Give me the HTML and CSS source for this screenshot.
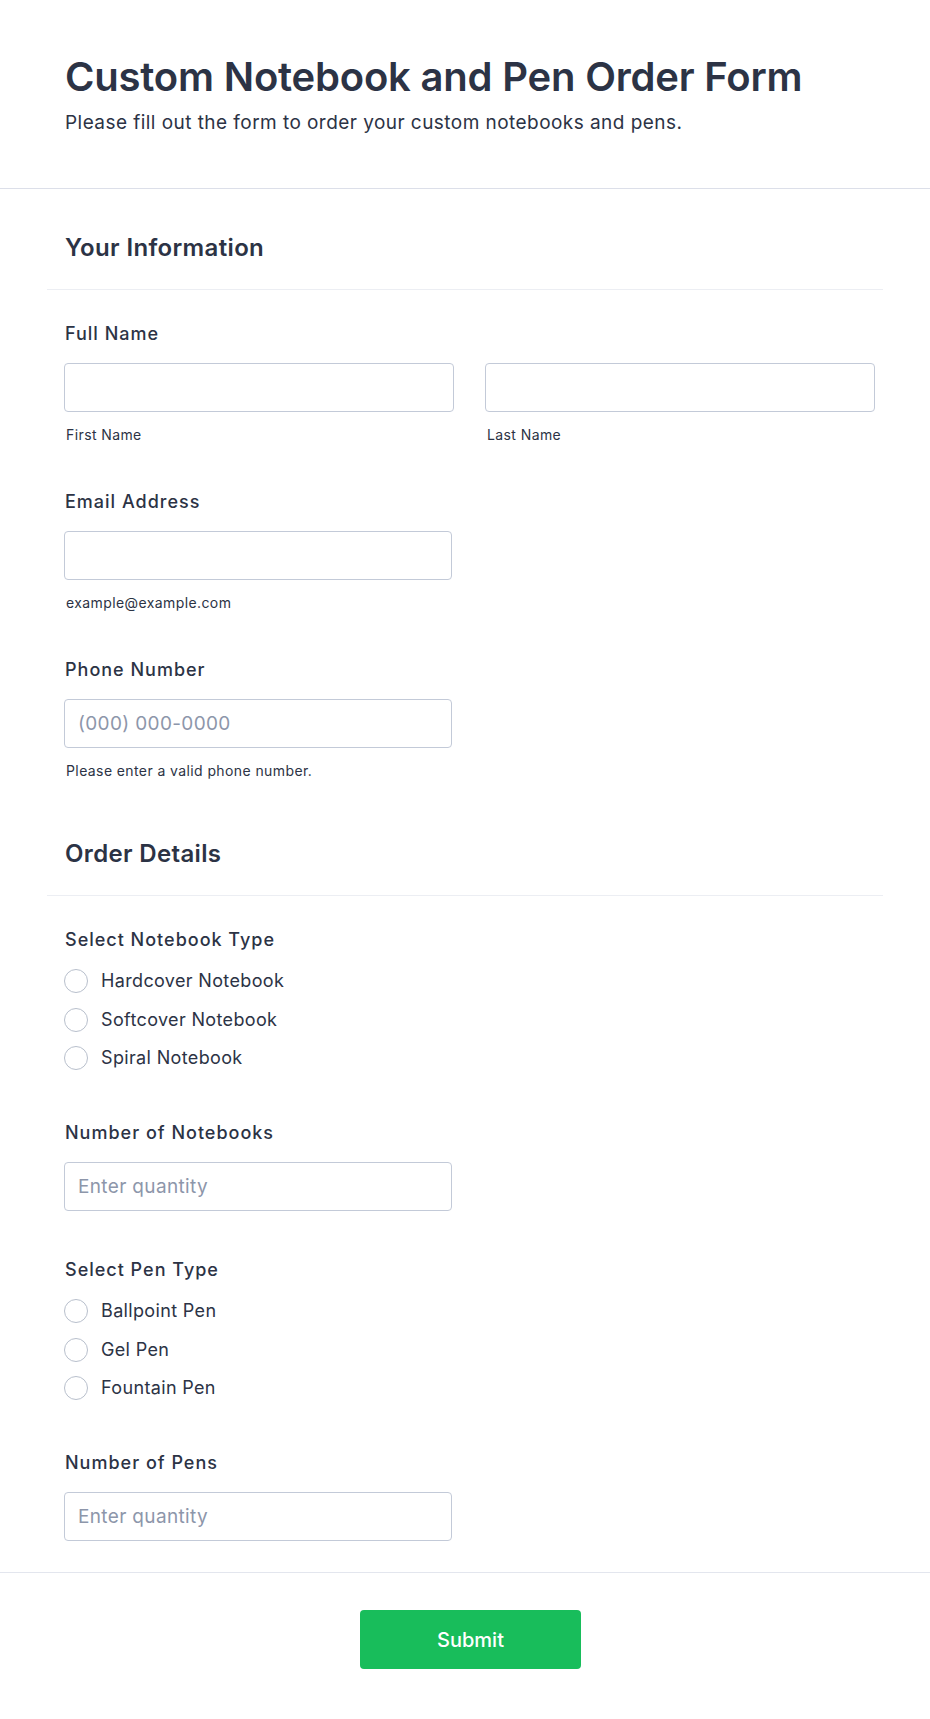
FILE: index.html
```html
<!DOCTYPE html>
<html lang="en">
<head>
<meta charset="utf-8">
<title>Custom Notebook and Pen Order Form</title>
<link rel="stylesheet" href="styles.css">
</head>
<body>
<div class="page">
  <header class="form-header">
    <h1 class="form-title">Custom Notebook and Pen Order Form</h1>
    <p class="form-subtitle">Please fill out the form to order your custom notebooks and pens.</p>
  </header>

  <section class="section">
    <div class="section-head"><h2 class="section-title">Your Information</h2></div>
    <div class="fields">
      <div class="field">
        <label class="field-label">Full Name</label>
        <div class="name-row">
          <div class="sub-col">
            <input class="text-input" type="text">
            <span class="sublabel">First Name</span>
          </div>
          <div class="sub-col">
            <input class="text-input" type="text">
            <span class="sublabel">Last Name</span>
          </div>
        </div>
      </div>
      <div class="field field-gap">
        <label class="field-label">Email Address</label>
        <input class="text-input single" type="email">
        <span class="sublabel">example@example.com</span>
      </div>
      <div class="field field-gap">
        <label class="field-label">Phone Number</label>
        <input class="text-input single" type="tel" placeholder="(000) 000-0000">
        <span class="sublabel">Please enter a valid phone number.</span>
      </div>
    </div>
  </section>

  <section class="section">
    <div class="section-head"><h2 class="section-title">Order Details</h2></div>
    <div class="fields">
      <div class="field">
        <label class="field-label">Select Notebook Type</label>
        <div class="radio-group">
          <label class="radio-row"><input class="radio" type="radio" name="notebook"><span>Hardcover Notebook</span></label>
          <label class="radio-row"><input class="radio" type="radio" name="notebook"><span>Softcover Notebook</span></label>
          <label class="radio-row"><input class="radio" type="radio" name="notebook"><span>Spiral Notebook</span></label>
        </div>
      </div>
      <div class="field field-after-radio">
        <label class="field-label">Number of Notebooks</label>
        <input class="text-input single" type="text" placeholder="Enter quantity">
      </div>
      <div class="field field-after-input">
        <label class="field-label">Select Pen Type</label>
        <div class="radio-group">
          <label class="radio-row"><input class="radio" type="radio" name="pen"><span>Ballpoint Pen</span></label>
          <label class="radio-row"><input class="radio" type="radio" name="pen"><span>Gel Pen</span></label>
          <label class="radio-row"><input class="radio" type="radio" name="pen"><span>Fountain Pen</span></label>
        </div>
      </div>
      <div class="field field-after-radio">
        <label class="field-label">Number of Pens</label>
        <input class="text-input single" type="text" placeholder="Enter quantity">
      </div>
    </div>
  </section>

  <footer class="form-footer">
    <button class="submit-btn" type="submit">Submit</button>
  </footer>
</div>
</body>
</html>
```

FILE: styles.css
```css
* { box-sizing: border-box; }

html, body {
  margin: 0;
  padding: 0;
  background: #ffffff;
}

body {
  font-family: Inter, "Noto Sans", "Liberation Sans", sans-serif;
  color: #2c3345;
}

.page {
  width: 930px;
}

.form-header {
  padding: 53px 65px 52px;
  border-bottom: 1px solid #dcdfe9;
}

.form-title {
  margin: 0;
  font-size: 40px;
  line-height: 48px;
  font-weight: 600;
  letter-spacing: -0.2px;
  color: #2c3345;
}

.form-subtitle {
  margin: 8px 0 0;
  font-size: 19px;
  line-height: 27px;
  font-weight: 400;
  letter-spacing: 0.45px;
  color: #2c3345;
}

.section-head {
  margin: 0 47px;
  padding: 44px 18px 26px;
  border-bottom: 1px solid #eceef3;
}

.section-title {
  margin: 0;
  font-size: 24px;
  line-height: 30px;
  font-weight: 600;
  letter-spacing: 0.35px;
  color: #2c3345;
}

.fields {
  padding: 32px 55px 15px 64px;
}

.field {
  display: flex;
  flex-direction: column;
  align-items: flex-start;
}

.field-gap { margin-top: 46px; }
.field-after-radio { margin-top: 51px; }
.field-after-input { margin-top: 47px; }

.field-label {
  font-size: 18px;
  line-height: 24px;
  font-weight: 500;
  letter-spacing: 1px;
  color: #2c3345;
  padding-left: 1px;
}

.name-row {
  display: grid;
  grid-template-columns: 390px 390px;
  column-gap: 31px;
  margin-top: 17px;
}

.sub-col {
  display: flex;
  flex-direction: column;
}

.name-row .text-input { margin-top: 0; }

.text-input {
  display: block;
  margin-top: 17px;
  width: 390px;
  height: 49px;
  padding: 0 13px;
  border: 1px solid #c3cad8;
  border-radius: 4px;
  background: #ffffff;
  font-family: Inter, "Noto Sans", "Liberation Sans", sans-serif;
  font-size: 19px;
  letter-spacing: 0.35px;
  color: #2c3345;
  outline: none;
}

.text-input.single { width: 388px; }

.text-input::placeholder {
  color: #8d96aa;
  opacity: 1;
}

.sublabel {
  display: block;
  margin-top: 14px;
  font-size: 14px;
  line-height: 18px;
  letter-spacing: 0.4px;
  color: #2c3345;
  padding-left: 2px;
}

.radio-group {
  display: flex;
  flex-direction: column;
  gap: 14.5px;
  margin-top: 17px;
}

.radio-row {
  display: flex;
  align-items: center;
  gap: 13px;
  height: 24px;
  font-size: 18px;
  line-height: 24px;
  letter-spacing: 0.35px;
  color: #2c3345;
}

.radio {
  appearance: none;
  -webkit-appearance: none;
  margin: 0;
  width: 24px;
  height: 24px;
  border: 1.5px solid #b8bfcc;
  border-radius: 50%;
  background: #ffffff;
  flex: none;
}

.form-footer {
  margin-top: 16px;
  border-top: 1px solid #e3e6ee;
  padding: 37px 53px 50px 64px;
  display: flex;
  justify-content: center;
}

.submit-btn {
  width: 221px;
  height: 59px;
  border: none;
  border-radius: 4px;
  background: #18bd5b;
  color: #ffffff;
  font-family: Inter, "Noto Sans", "Liberation Sans", sans-serif;
  font-size: 20px;
  font-weight: 500;
}
```
